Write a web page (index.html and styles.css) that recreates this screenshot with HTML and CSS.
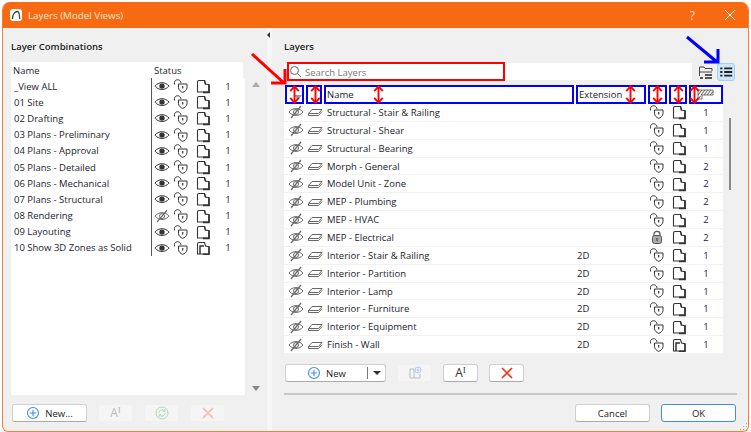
FILE: index.html
```html
<!DOCTYPE html>
<html lang="en">
<head>
    <meta charset="UTF-8">
    <title>Layers (Model Views)</title>
    <link rel="stylesheet" href="styles.css">
</head>
<body>
    <svg class="sprite">
        <symbol id="eye" viewBox="0 0 16 16"><path d="M1 8C4.500 3.500 11.500 3.500 15 8C11.500 12.500 4.500 12.500 1 8Z" fill="none" stroke="currentColor"/><circle cx="8" cy="8" r="2.700" fill="currentColor"/></symbol>
        <symbol id="eye-off" viewBox="0 0 16 16"><path d="M1 8C4.500 3.500 11.500 3.500 15 8C11.500 12.500 4.500 12.500 1 8Z" fill="none" stroke="currentColor"/><circle cx="8" cy="8" r="2.500" fill="none" stroke="currentColor"/><path d="M3 14L13 2" stroke="currentColor" stroke-width="1.200"/></symbol>
        <symbol id="lock" viewBox="0 0 16 16"><path d="M5.500 6H14V9.500C14 12 11.500 13.800 9.700 14.300C8 13.800 5.500 12 5.500 9.500Z" fill="#fff" stroke="currentColor"/><path d="M1.500 6.500V4.500C1.500 1 7.500 0.500 8 5" fill="none" stroke="currentColor"/><path d="M9.700 8V10.500" stroke="currentColor" stroke-width="1.200"/></symbol>
        <symbol id="lock-shut" viewBox="0 0 16 16"><path d="M5 7V5C5 1.500 11 1.500 11 5V7" fill="none" stroke="#555" stroke-width="1.200"/><rect x="3.500" y="6.500" width="9" height="8" rx="2" fill="#aaa" stroke="#555"/><path d="M8 9V12" stroke="#333"/></symbol>
        <symbol id="sheet" viewBox="0 0 16 16"><path d="M2.500 14V4Q2.500 2.500 4 2.500H9.500L10.500 6L14 6.800V14Z" fill="#fff" stroke="currentColor" stroke-width="1.100"/><path d="M14 6.500V14.300H8" fill="none" stroke="currentColor" stroke-width="1.700"/><path d="M9.500 2.500L10.500 6.500" stroke="currentColor" stroke-width="1.300"/></symbol>
        <symbol id="sheet-full" viewBox="0 0 16 16"><path d="M2.500 14V4Q2.500 2.500 4 2.500H9.500L10.500 6L14 6.800V14Z" fill="#fff" stroke="currentColor" stroke-width="1.100"/><path d="M14 6.500V14.300H8M5 14V6H9" fill="none" stroke="currentColor" stroke-width="1.500"/></symbol>
        <symbol id="layer" viewBox="0 0 16 16"><path d="M1.500 9.500L5 5.500H15L11.500 9.500Z" fill="#fff" stroke="currentColor"/><path d="M1.500 9.500V11.500H11.500L15 7.500" fill="none" stroke="currentColor"/></symbol>
        <symbol id="plus" viewBox="0 0 14 14"><circle cx="7" cy="7" r="5.500" fill="none" stroke="#3f8ee8" stroke-width="1.100"/><path d="M7 3.800V10.200M3.800 7H10.200" stroke="#3f8ee8" stroke-width="1.100"/></symbol>
        <symbol id="cross" viewBox="0 0 14 14"><path d="M2 2L12 12M12 2L2 12" stroke="currentColor" stroke-width="1.700"/></symbol>
        <symbol id="updown" viewBox="0 0 11 20"><path d="M5.500 2V18" stroke="#f00" stroke-width="2"/><path d="M1 6.500L5.500 1.500L10 6.500M1 13.500L5.500 18.500L10 13.500" fill="none" stroke="#f00" stroke-width="2"/></symbol>
    </svg>

    <div class="window">
        <div class="titlebar">
            <span class="logo"><svg width="12" height="12" viewBox="0 0 12 12"><path d="M2.500 10C2.500 5 5 2.500 7.500 2.500C9 2.500 9.500 5 9.700 10" fill="none" stroke="#444" stroke-width="1.300"/></svg></span>
            <span class="title">Layers (Model Views)</span>
            <span class="help">?</span>
            <svg class="close" width="12" height="12" viewBox="0 0 12 12"><path d="M1 1L11 11M11 1L1 11" stroke="#fff" stroke-width="1"/></svg>
        </div>

        <div class="panes">
            <div class="left-pane">
                <h2>Layer Combinations</h2>
                <div class="combo-wrap">
                    <div class="combo-list">
                        <div class="combo-head"><span>Name</span><span>Status</span></div>
                        <div class="combo-body">
                            <div class="combo-row"><span>_View ALL</span><svg class="ic"><use href="#eye"/></svg><svg class="ic"><use href="#lock"/></svg><svg class="ic"><use href="#sheet"/></svg><span class="num">1</span></div>
                            <div class="combo-row"><span>01 Site</span><svg class="ic"><use href="#eye"/></svg><svg class="ic"><use href="#lock"/></svg><svg class="ic"><use href="#sheet"/></svg><span class="num">1</span></div>
                            <div class="combo-row"><span>02 Drafting</span><svg class="ic"><use href="#eye"/></svg><svg class="ic"><use href="#lock"/></svg><svg class="ic"><use href="#sheet"/></svg><span class="num">1</span></div>
                            <div class="combo-row"><span>03 Plans - Preliminary</span><svg class="ic"><use href="#eye"/></svg><svg class="ic"><use href="#lock"/></svg><svg class="ic"><use href="#sheet"/></svg><span class="num">1</span></div>
                            <div class="combo-row"><span>04 Plans - Approval</span><svg class="ic"><use href="#eye"/></svg><svg class="ic"><use href="#lock"/></svg><svg class="ic"><use href="#sheet"/></svg><span class="num">1</span></div>
                            <div class="combo-row"><span>05 Plans - Detailed</span><svg class="ic"><use href="#eye"/></svg><svg class="ic"><use href="#lock"/></svg><svg class="ic"><use href="#sheet"/></svg><span class="num">1</span></div>
                            <div class="combo-row"><span>06 Plans - Mechanical</span><svg class="ic"><use href="#eye"/></svg><svg class="ic"><use href="#lock"/></svg><svg class="ic"><use href="#sheet"/></svg><span class="num">1</span></div>
                            <div class="combo-row"><span>07 Plans - Structural</span><svg class="ic"><use href="#eye"/></svg><svg class="ic"><use href="#lock"/></svg><svg class="ic"><use href="#sheet"/></svg><span class="num">1</span></div>
                            <div class="combo-row"><span>08 Rendering</span><svg class="ic dim"><use href="#eye-off"/></svg><svg class="ic"><use href="#lock"/></svg><svg class="ic"><use href="#sheet"/></svg><span class="num">1</span></div>
                            <div class="combo-row"><span>09 Layouting</span><svg class="ic"><use href="#eye"/></svg><svg class="ic"><use href="#lock"/></svg><svg class="ic"><use href="#sheet"/></svg><span class="num">1</span></div>
                            <div class="combo-row"><span>10 Show 3D Zones as Solid</span><svg class="ic"><use href="#eye"/></svg><svg class="ic"><use href="#lock"/></svg><svg class="ic"><use href="#sheet-full"/></svg><span class="num">1</span></div>
                        </div>
                    </div>
                    <div class="combo-scroll"><span class="tri-up"></span><span class="tri-down"></span></div>
                </div>
                <div class="btn-row">
                    <button class="btn btn-new"><svg class="btn-ic"><use href="#plus"/></svg>New...</button>
                    <button class="btn off"><span class="rename">A<sup>I</sup></span></button>
                    <button class="btn off"><svg class="btn-ic" viewBox="0 0 14 14"><circle cx="7" cy="7" r="6" fill="none" stroke="#a8dcb8"/><path d="M3.800 7A3.200 3.200 0 0 1 9.500 5M10.200 7A3.200 3.200 0 0 1 4.500 9M9.800 3V5.300H7.600M4.200 11V8.700H6.400" fill="none" stroke="#a8dcb8"/></svg></button>
                    <button class="btn off"><svg class="btn-ic faded-red"><use href="#cross"/></svg></button>
                </div>
            </div>

            <div class="splitter"><span class="tri-left"></span></div>

            <div class="right-pane">
                <h2>Layers</h2>
                <div class="search-row">
                    <div class="search">
                        <svg width="13" height="13" viewBox="0 0 13 13"><circle cx="5.500" cy="5.500" r="4" fill="none" stroke="#666"/><path d="M8.500 8.500L12 12" stroke="#666"/></svg>
                        <span class="search-text">Search Layers</span>
                        <span class="red-box"></span>
                    </div>
                    <svg class="view-btn" width="18" height="18" viewBox="0 0 18 18"><path d="M2.500 13V4H7L8 5.500H15V8M2.500 9H15" fill="none" stroke="#444"/><path d="M3 15H6M8 12H15M8 15H15" stroke="#222" stroke-width="1.500"/></svg>
                    <svg class="view-btn active" width="18" height="18" viewBox="0 0 18 18"><path d="M2.500 5H5M7 5H16M2.500 9H5M7 9H16M2.500 13H5M7 13H16" stroke="#222" stroke-width="2"/></svg>
                </div>

                <div class="layers-wrap">
                    <div class="layers-list">
                        <div class="layer-grid layer-head">
                            <div class="hcell"><span class="sort-tri"></span><svg class="updown"><use href="#updown"/></svg></div>
                            <div class="hcell"><svg class="updown"><use href="#updown"/></svg></div>
                            <div class="hcell text"><span>Name</span><svg class="updown at-name"><use href="#updown"/></svg></div>
                            <div class="hcell text"><span>Extension</span><svg class="updown at-ext"><use href="#updown"/></svg></div>
                            <div class="hcell"><svg class="updown"><use href="#updown"/></svg></div>
                            <div class="hcell"><svg class="updown"><use href="#updown"/></svg></div>
                            <div class="hcell last">
                                <svg class="hatch" width="17" height="11" viewBox="0 0 17 11"><path d="M1 1H16V6H5V10H1Z" fill="#fff" stroke="#777"/><path d="M1 6L5 1M4 6L8 1M7 6L11 1M10 6L14 1M13 6L16 2.500M1 10L4 6.500" stroke="#555"/></svg>
                                <svg class="updown at-pen"><use href="#updown"/></svg>
                            </div>
                        </div>
                        <div class="layer-grid layer-row"><svg class="ic dim"><use href="#eye-off"/></svg><svg class="ic dim"><use href="#layer"/></svg><span class="name">Structural - Stair &amp; Railing</span><span class="ext"></span><svg class="ic"><use href="#lock"/></svg><svg class="ic"><use href="#sheet"/></svg><span class="num">1</span></div>
                        <div class="layer-grid layer-row"><svg class="ic dim"><use href="#eye-off"/></svg><svg class="ic dim"><use href="#layer"/></svg><span class="name">Structural - Shear</span><span class="ext"></span><svg class="ic"><use href="#lock"/></svg><svg class="ic"><use href="#sheet"/></svg><span class="num">1</span></div>
                        <div class="layer-grid layer-row"><svg class="ic dim"><use href="#eye-off"/></svg><svg class="ic dim"><use href="#layer"/></svg><span class="name">Structural - Bearing</span><span class="ext"></span><svg class="ic"><use href="#lock"/></svg><svg class="ic"><use href="#sheet"/></svg><span class="num">1</span></div>
                        <div class="layer-grid layer-row"><svg class="ic dim"><use href="#eye-off"/></svg><svg class="ic dim"><use href="#layer"/></svg><span class="name">Morph - General</span><span class="ext"></span><svg class="ic"><use href="#lock"/></svg><svg class="ic"><use href="#sheet"/></svg><span class="num">2</span></div>
                        <div class="layer-grid layer-row"><svg class="ic dim"><use href="#eye-off"/></svg><svg class="ic dim"><use href="#layer"/></svg><span class="name">Model Unit - Zone</span><span class="ext"></span><svg class="ic"><use href="#lock"/></svg><svg class="ic"><use href="#sheet"/></svg><span class="num">2</span></div>
                        <div class="layer-grid layer-row"><svg class="ic dim"><use href="#eye-off"/></svg><svg class="ic dim"><use href="#layer"/></svg><span class="name">MEP - Plumbing</span><span class="ext"></span><svg class="ic"><use href="#lock"/></svg><svg class="ic"><use href="#sheet"/></svg><span class="num">2</span></div>
                        <div class="layer-grid layer-row"><svg class="ic dim"><use href="#eye-off"/></svg><svg class="ic dim"><use href="#layer"/></svg><span class="name">MEP - HVAC</span><span class="ext"></span><svg class="ic"><use href="#lock"/></svg><svg class="ic"><use href="#sheet"/></svg><span class="num">2</span></div>
                        <div class="layer-grid layer-row"><svg class="ic dim"><use href="#eye-off"/></svg><svg class="ic dim"><use href="#layer"/></svg><span class="name">MEP - Electrical</span><span class="ext"></span><svg class="ic"><use href="#lock-shut"/></svg><svg class="ic"><use href="#sheet"/></svg><span class="num">2</span></div>
                        <div class="layer-grid layer-row"><svg class="ic dim"><use href="#eye-off"/></svg><svg class="ic dim"><use href="#layer"/></svg><span class="name">Interior - Stair &amp; Railing</span><span class="ext">2D</span><svg class="ic"><use href="#lock"/></svg><svg class="ic"><use href="#sheet"/></svg><span class="num">1</span></div>
                        <div class="layer-grid layer-row"><svg class="ic dim"><use href="#eye-off"/></svg><svg class="ic dim"><use href="#layer"/></svg><span class="name">Interior - Partition</span><span class="ext">2D</span><svg class="ic"><use href="#lock"/></svg><svg class="ic"><use href="#sheet"/></svg><span class="num">1</span></div>
                        <div class="layer-grid layer-row"><svg class="ic dim"><use href="#eye-off"/></svg><svg class="ic dim"><use href="#layer"/></svg><span class="name">Interior - Lamp</span><span class="ext">2D</span><svg class="ic"><use href="#lock"/></svg><svg class="ic"><use href="#sheet"/></svg><span class="num">1</span></div>
                        <div class="layer-grid layer-row"><svg class="ic dim"><use href="#eye-off"/></svg><svg class="ic dim"><use href="#layer"/></svg><span class="name">Interior - Furniture</span><span class="ext">2D</span><svg class="ic"><use href="#lock"/></svg><svg class="ic"><use href="#sheet"/></svg><span class="num">1</span></div>
                        <div class="layer-grid layer-row"><svg class="ic dim"><use href="#eye-off"/></svg><svg class="ic dim"><use href="#layer"/></svg><span class="name">Interior - Equipment</span><span class="ext">2D</span><svg class="ic"><use href="#lock"/></svg><svg class="ic"><use href="#sheet"/></svg><span class="num">1</span></div>
                        <div class="layer-grid layer-row"><svg class="ic dim"><use href="#eye-off"/></svg><svg class="ic dim"><use href="#layer"/></svg><span class="name">Finish - Wall</span><span class="ext">2D</span><svg class="ic"><use href="#lock"/></svg><svg class="ic"><use href="#sheet-full"/></svg><span class="num">1</span></div>
                    </div>
                    <div class="layers-scroll"><span class="thumb"></span></div>
                </div>

                <div class="btn-row right-btns">
                    <div class="btn split">
                        <span class="split-main"><svg class="btn-ic"><use href="#plus"/></svg>New</span>
                        <span class="split-drop"><span class="tri-drop"></span></span>
                    </div>
                    <button class="btn off"><svg class="btn-ic" viewBox="0 0 14 14"><path d="M2 3H6V12H12V8M2 3V12H6" fill="none" stroke="#bbb"/><circle cx="10" cy="4" r="3" fill="none" stroke="#a9c9ee"/><path d="M10 2.500V5.500M8.500 4H11.500" stroke="#a9c9ee"/></svg></button>
                    <button class="btn"><span class="rename on">A<sup>I</sup></span></button>
                    <button class="btn"><svg class="btn-ic red"><use href="#cross"/></svg></button>
                </div>

                <div class="separator"></div>

                <div class="footer">
                    <button class="btn wide">Cancel</button>
                    <button class="btn wide primary">OK</button>
                </div>
            </div>
        </div>

        <svg class="grip" width="9" height="9" viewBox="0 0 9 9"><path d="M7 1H8V2H7ZM4 4H5V5H4ZM7 4H8V5H7ZM1 7H2V8H1ZM4 7H5V8H4ZM7 7H8V8H7Z" fill="#aaa"/></svg>

        <!-- annotation arrows drawn on top of the dialog -->
        <svg class="arrows" width="747" height="430" viewBox="0 0 747 430">
            <path d="M250 52L282 81M269 81H283V67" fill="none" stroke="#f00" stroke-width="3"/>
            <path d="M685 35L715 60M702 60H716V47" fill="none" stroke="#00f" stroke-width="3"/>
        </svg>
    </div>
</body>
</html>
```

FILE: styles.css
```css
* {
    box-sizing: border-box;
}
body {
    margin: 0;
    background-color: #fff;
    font-family: "Open Sans", sans-serif;
    font-size: 9.5px;
    color: #1c1c2c;
}
.sprite {
    display: none;
}
.window {
    position: relative;
    width: 747px;
    height: 430px;
    margin: 2px 0 0 2px;
    background-color: #f0f0f0;
    border: 1px solid #f0813a;
    border-top: none;
    border-radius: 8px 8px 6px 6px;
    overflow: hidden;
    display: flex;
    flex-direction: column;
}
.titlebar {
    height: 26px;
    margin: 0 -1px;
    padding: 0 13px 0 8px;
    background-color: #f76a12;
    color: #fde3d3;
    display: flex;
    align-items: center;
    flex-shrink: 0;
}
.logo {
    width: 12px;
    height: 12px;
    margin-right: 6px;
    background-color: #fff;
    border-radius: 3px;
    display: flex;
}
.title {
    font-size: 9.8px;
    flex: 1;
}
.help {
    font-size: 12px;
    margin-right: 29px;
}
.panes {
    flex: 1;
    display: flex;
    min-height: 0;
}
h2 {
    margin: 0;
    font-size: 9.5px;
    font-weight: 600;
    line-height: 14px;
    color: #1c1c1c;
}

.left-pane {
    width: 264px;
    padding: 12px 0 0 8px;
    flex-shrink: 0;
}
.combo-wrap {
    display: flex;
    height: 333px;
    margin-top: 8px;
}
.combo-list {
    width: 234px;
    display: flex;
    flex-direction: column;
}
.combo-head {
    width: 232px;
    height: 16px;
    background-color: #fff;
    display: grid;
    grid-template-columns: 141px 1fr;
    align-items: center;
    padding-left: 2px;
}
.combo-body {
    flex: 1;
    background-color: #fff;
    padding-top: 0;
}
.combo-row {
    height: 16.2px;
    padding-left: 3px;
    display: grid;
    grid-template-columns: 137px 22px 22px 20.500px 25px;
    align-items: center;
    justify-items: start;
}
.combo-row > .ic:first-of-type {
    border-left: 1px solid #555;
    width: 19px;
    height: 16.2px;
    padding-left: 2px;
}
.combo-row .num {
    justify-self: center;
}
.combo-scroll {
    width: 22px;
    padding: 20px 0 4px;
    display: flex;
    flex-direction: column;
    justify-content: space-between;
    align-items: center;
}
.tri-up, .tri-down {
    width: 0;
    height: 0;
    border-left: 4px solid transparent;
    border-right: 4px solid transparent;
}
.tri-up {
    border-bottom: 5px solid #aaa;
}
.tri-down {
    border-top: 5px solid #888;
}

.ic {
    width: 16px;
    height: 16px;
    color: #333;
}
.ic.dim {
    color: #666;
}
.num {
    color: #2d2050;
}

.btn-row {
    display: flex;
    gap: 11px;
    margin-top: 9px;
    padding-left: 1px;
}
.btn {
    height: 18px;
    width: 35px;
    padding: 0;
    font: inherit;
    color: #1c1c1c;
    background-color: #fff;
    border: 1px solid #cfcfcf;
    border-bottom-color: #aaa;
    border-radius: 3px;
    display: flex;
    align-items: center;
    justify-content: center;
}
.btn.off {
    background-color: #f5f5f5;
    border-color: #f0f0f0;
}
.btn-new {
    width: 75px;
    gap: 5px;
}
.btn-ic {
    width: 14px;
    height: 14px;
}
.faded-red {
    color: #fbb8a8;
}
.red {
    color: #ee3a1a;
}
.rename {
    font-size: 12px;
    color: #bbb;
    line-height: 12px;
}
.rename sup {
    font-family: "Liberation Serif", serif;
    font-size: 9px;
    vertical-align: 4px;
    line-height: 0;
}
.rename.on {
    color: #333;
}

.splitter {
    width: 5px;
    background-color: #f6f6f6;
    flex-shrink: 0;
    padding-top: 4px;
}
.tri-left {
    display: block;
    width: 0;
    height: 0;
    border-top: 3px solid transparent;
    border-bottom: 3px solid transparent;
    border-right: 3px solid #333;
}

.right-pane {
    flex: 1;
    padding: 12px 11px 0 12px;
    min-width: 0;
}
.search-row {
    display: flex;
    align-items: center;
    margin-top: 9px;
    height: 17px;
}
.search {
    position: relative;
    width: 408px;
    height: 17px;
    margin-right: 5px;
    padding-left: 5px;
    background-color: #fff;
    color: #777;
    display: flex;
    align-items: center;
    gap: 3px;
}
.search-text {
    padding-top: 1px;
}
.red-box {
    position: absolute;
    left: 3px;
    top: -1px;
    width: 218px;
    height: 19px;
    border: 2px solid #f00;
}
.view-btn {
    margin-right: 2px;
}
.view-btn.active {
    background-color: #cde6fa;
    border: 1px solid #a5d0f2;
    border-radius: 3px;
}

.layers-wrap {
    display: flex;
    margin-top: 5px;
}
.layers-list {
    width: 439px;
    padding-left: 1px;
}
.layer-grid {
    display: grid;
    grid-template-columns: 21px 18px 252px 72px 21px 20px 34px;
    align-items: center;
    justify-items: center;
}
.layer-head {
    height: 19px;
    margin-left: -1px;
    padding-left: 1px;
    background-color: #fff;
}
.hcell {
    position: relative;
    justify-self: stretch;
    height: 19px;
    margin-right: 2px;
    border: 2px solid #00f;
    background-color: #fff;
    display: flex;
    align-items: center;
}
.hcell.text {
    padding-left: 1px;
}
.hcell.last {
    margin-right: 0;
    justify-content: flex-end;
    padding-right: 7px;
}
.updown {
    position: absolute;
    top: -2px;
    left: 2px;
    width: 11px;
    height: 19px;
}
.updown.at-name {
    left: 47px;
}
.updown.at-ext {
    left: 47px;
}
.updown.at-pen {
    left: -2px;
}
.sort-tri {
    margin-left: 7px;
    margin-top: 5px;
    width: 0;
    height: 0;
    border-left: 4px solid transparent;
    border-right: 4px solid transparent;
    border-top: 5px solid #999;
}
.layer-row {
    height: 17.86px;
    margin-left: -1px;
    padding-left: 1px;
    background-color: #fff;
    border-bottom: 1px solid #f2f2f2;
}
.layer-row .ic:nth-of-type(3) {
    margin-right: 3px;
}
.layer-row .name {
    justify-self: start;
    padding-left: 3px;
}
.layer-row .ext {
    justify-self: start;
    padding-left: 1px;
}
.layers-scroll {
    padding: 33px 0 0 6px;
}
.thumb {
    display: block;
    width: 2px;
    height: 72px;
    background-color: #8a8a8a;
}

.right-btns {
    margin-top: 10px;
}
.split {
    width: 101px;
    justify-content: flex-start;
}
.split-main {
    flex: 1;
    display: flex;
    align-items: center;
    justify-content: center;
    gap: 5px;
}
.split-drop {
    width: 18px;
    height: 12px;
    border-left: 1px solid #777;
    display: flex;
    align-items: center;
    justify-content: center;
}
.tri-drop {
    width: 0;
    height: 0;
    border-left: 4px solid transparent;
    border-right: 4px solid transparent;
    border-top: 4px solid #333;
}
.separator {
    height: 2px;
    margin: 11px 0 0;
    background-color: #c8c8c8;
}
.footer {
    display: flex;
    justify-content: flex-end;
    gap: 11px;
    margin-top: 9px;
    padding-right: 1px;
}
.wide {
    width: 75px;
}
.primary {
    border: 1px solid #3f8fd6;
    border-bottom-color: #3f8fd6;
}
.grip {
    position: absolute;
    right: 0;
    bottom: 0;
}
.arrows {
    position: absolute;
    left: -1px;
    top: 0;
    pointer-events: none;
}
```
